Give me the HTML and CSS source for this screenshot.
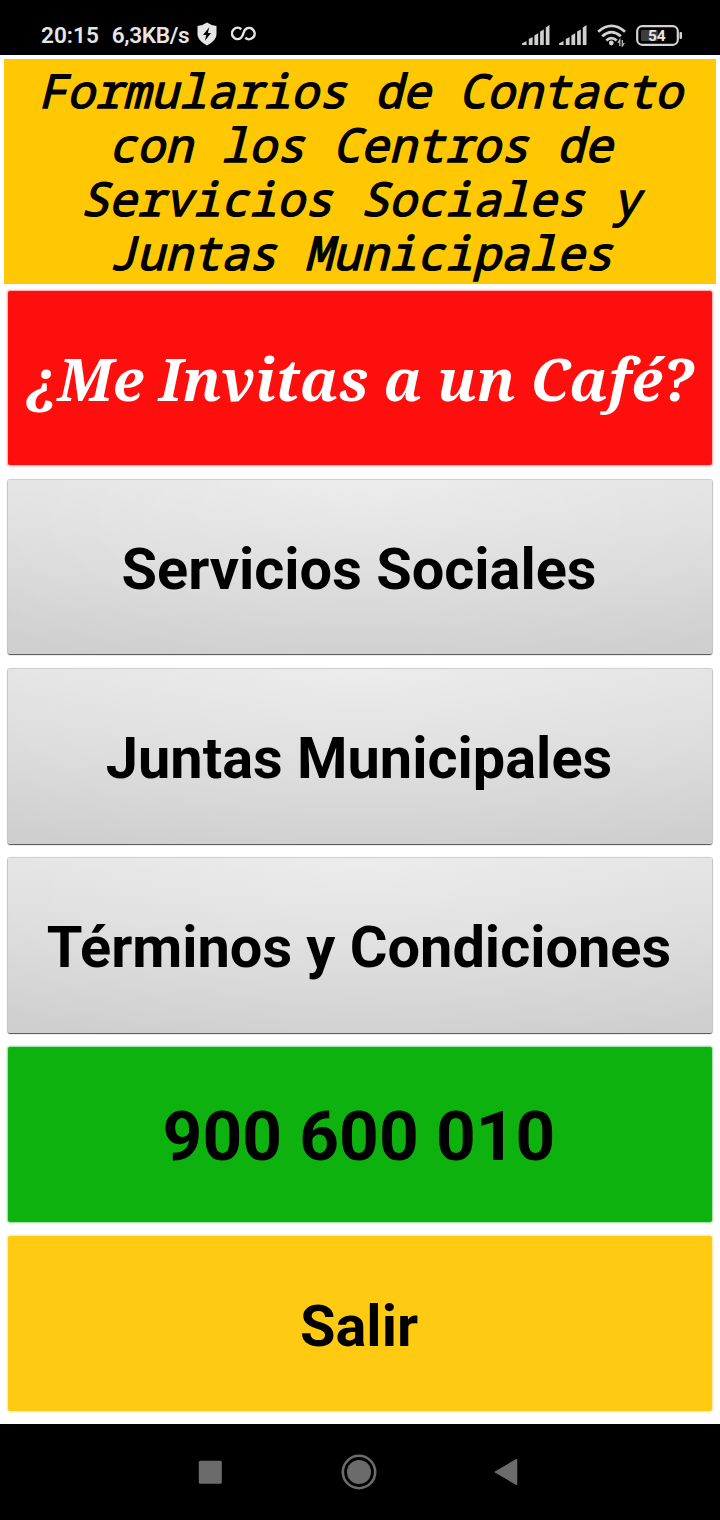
FILE: index.html
```html
<!DOCTYPE html>
<html lang="es">
<head>
<meta charset="utf-8">
<title>Formularios de Contacto</title>
<link rel="stylesheet" href="styles.css">
</head>
<body>
<header class="status">
  <div class="status-left">
    <span class="clock">20:15</span>
    <span class="speed">6,3KB/s</span>
    <svg class="shield" width="20" height="24" viewBox="0 0 20 24"><path d="M10 .5Q14 3.400 19.500 4V12.500Q19.500 18.500 10 23.400Q.5 18.500 .5 12.500V4Q6 3.400 10 .5Z" fill="#e6e6e6"/><path d="M12.200 5.300 6 13H9.200L8 18.700 14 11H10.900Z" fill="#000"/></svg>
    <svg class="loop" width="25" height="15" viewBox="0 0 25 15"><path d="M10.300 3.200A5.600 5.600 0 1 0 9.500 12.200C12.800 10.300 11.800 4.800 15 2.900A5.600 5.600 0 1 1 14.300 11.800" fill="none" stroke="#e6e6e6" stroke-width="2.500"/></svg>
  </div>
  <div class="status-right">
    <svg width="28" height="21" viewBox="0 0 28 21"><path d="M0 20v-1.500l4.500-2.500V20ZM6.800 20v-6l3.800-2v8ZM12.400 20V10.500l3.800-2.200V20ZM18.100 20V6.500l3.700-2V20ZM23.800 20V2.500L27.500 0V20Z" fill="#d0d0d0"/></svg>
    <svg width="28" height="21" viewBox="0 0 28 21"><path d="M0 20v-1.500l4.500-2.500V20ZM6.800 20v-6l3.800-2v8ZM12.400 20V10.500l3.800-2.200V20ZM18.100 20V6.500l3.700-2V20ZM23.800 20V2.500L27.500 0V20Z" fill="#d0d0d0"/></svg>
    <svg class="wifi" width="30" height="23" viewBox="0 0 30 23"><g fill="none" stroke="#d2d2d2" stroke-width="2.800"><path d="M1.200 7.800Q14.500-4 28 7.800"/><path d="M5.200 12.300Q14.500 4 23.800 12.300"/><path d="M9.300 16.500Q14.500 11.800 19.700 16.500"/></g><circle cx="14.300" cy="19" r="2.400" fill="#d2d2d2"/><path d="M22.800 22v-6l-2 3M25.300 16v6l2-3" fill="none" stroke="#bbb" stroke-width="1.300"/></svg>
    <svg class="battery" width="47" height="21" viewBox="0 0 47 21"><rect x="1.200" y="1.200" width="40.600" height="18.600" rx="5" fill="none" stroke="#d2d2d2" stroke-width="2.200"/><rect x="5" y="5" width="17" height="11" rx="1.500" fill="#3c3c3c"/><rect x="43.500" y="7" width="2.500" height="7" rx="1" fill="#d2d2d2"/><text class="charge" x="20.800" y="16" text-anchor="middle">54</text></svg>
  </div>
</header>
<main class="screen">
  <h1 class="title"><span>Formularios de Contacto</span><span>con los Centros de</span><span>Servicios Sociales y</span><span>Juntas Municipales</span></h1>
  <div class="buttons">
    <button class="btn coffee">¿Me Invitas a un Café?</button>
    <button class="btn">Servicios Sociales</button>
    <button class="btn">Juntas Municipales</button>
    <button class="btn">Términos y Condiciones</button>
    <button class="btn phone">900 600 010</button>
    <button class="btn exit">Salir</button>
  </div>
</main>
<nav class="nav">
  <svg width="24" height="24"><rect x=".8" y=".8" width="23" height="23" rx="1.500" fill="#6b6b6b"/></svg>
  <svg class="home" width="36" height="36"><circle cx="18" cy="18" r="16.200" fill="none" stroke="#6b6b6b" stroke-width="2.600"/><circle cx="18" cy="18" r="12" fill="#6b6b6b"/></svg>
  <svg width="24" height="28"><path d="M1.500 14 22.500 1.700V26.300Z" fill="#6b6b6b" stroke="#6b6b6b" stroke-width="1.500" stroke-linejoin="round"/></svg>
</nav>
</body>
</html>
```
FILE: styles.css
```css
* { box-sizing: border-box; }
body { margin: 0; width: 720px; height: 1520px; display: flex; flex-direction: column; background: #fff; font-family: Roboto, "Liberation Sans", sans-serif; }
.status { height: 55px; background: #000; color: #e6e6e6; display: flex; justify-content: space-between; padding: 14px 37px 0 41px; }
.status-left, .status-right { display: flex; height: 42px; align-items: center; }
.status-left { font-size: 22.6px; font-weight: 600; }
.speed { margin-left: 13px; letter-spacing: -.35px; }
.shield { margin-left: 8px; margin-top: -2px; }
.loop { margin-left: 14px; margin-top: -3px; }
.status-right { gap: 9px; }
.wifi { margin-left: 1px; }
.charge { font: 700 15.5px Roboto, sans-serif; fill: #e6e6e6; }
.screen { height: 1369px; padding: 4px; }
.title { margin: 0; height: 225px; background: #ffc803; color: #000; font: 400 46.67px/54px "Noto Sans Mono", "Droid Sans Mono", "Liberation Mono", monospace; text-align: center; padding: 4px 0 0 10px; -webkit-text-stroke: 1.3px #000; }
.title span { display: block; white-space: nowrap; transform: skewX(-14deg); }
.buttons { display: flex; flex-direction: column; gap: 14.7px; padding: 7px 4px 0; }
.btn { height: 174.4px; border: 0; border-radius: 2px; padding: 4px 2px 0 0; color: #000; font: 700 57.7px Roboto, sans-serif; white-space: nowrap; background: radial-gradient(ellipse 75% 120% at 50% 0, rgba(255,255,255,.35), transparent), linear-gradient(#e2e2e2, #cecece); box-shadow: 0 0 1px 1px rgba(0,0,0,.2), 0 1px 1px #666; }
.coffee { background: #ff0e0e; color: #fff; font: italic 700 58.1px "Noto Serif", "Droid Serif", "DejaVu Serif Condensed", "DejaVu Serif", serif; padding: 0; box-shadow: 0 0 2px 1px #ff9b9b; }
.phone { background: #0eb20e; font-size: 69.4px; box-shadow: 0 0 2px 1px #8fda8f; }
.exit { background: #ffcb12; box-shadow: 0 0 2px 1px #ffe79a; }
.nav { height: 96px; background: #000; display: flex; align-items: center; justify-content: space-between; padding: 0 202px 0 198px; }
.home { margin-left: 2px; }
```
